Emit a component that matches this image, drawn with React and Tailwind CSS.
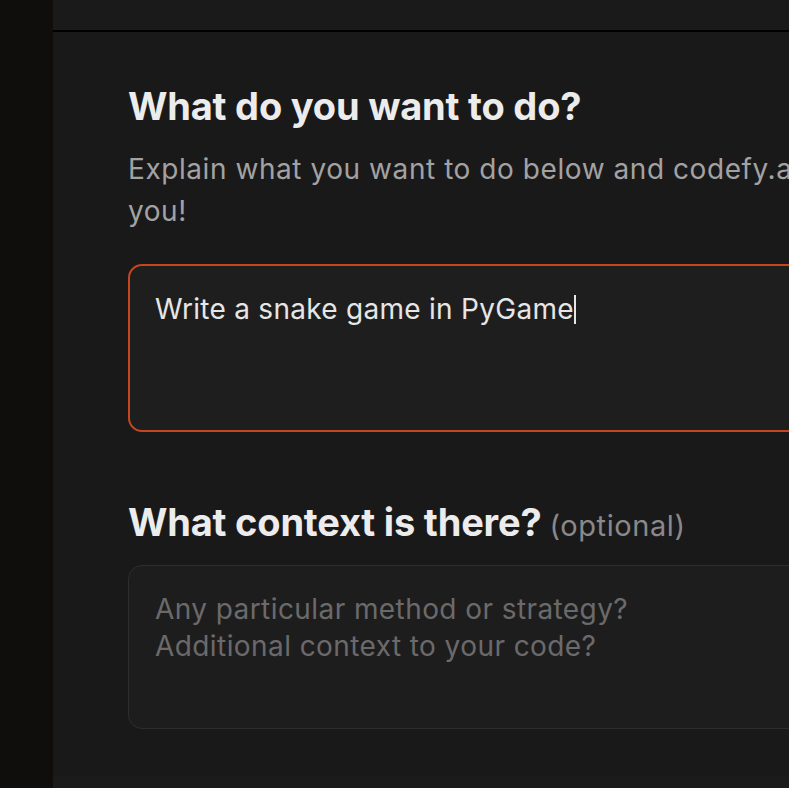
export default function App() {
  return (
    <div className="flex h-[788px] w-[789px] overflow-hidden bg-[#0f0e0d]" style={{ fontFamily: "Inter, 'Noto Sans', sans-serif" }}>
      <div className="w-[53px] shrink-0 bg-[#0f0e0d]" />
      <div className="flex min-w-0 flex-1 flex-col bg-[#1a191a]">
        <div className="h-[32px] shrink-0 border-b-2 border-black bg-[#1b1a1b]" />
        <div className="flex flex-1 flex-col pl-[75px]">
          <h1 className="mt-[51px] whitespace-nowrap text-[38px] font-bold leading-[46px] tracking-[-0.005em] text-[#ececec]">
            What do you want to do?
          </h1>
          <p className="mt-[19px] w-[1010px] shrink-0 text-[28px] leading-[42px] tracking-[0.02em] text-[#a3a2a3]">
            Explain what you want to do below and codefy.ai will write the code for you!
          </p>
          <div className="mt-[32px] h-[168px] w-[720px] shrink-0 rounded-[14px] border-2 border-[#c4461f] bg-[#1f1e1f] pl-[25px] pt-[23px]">
            <span className="text-[28px] leading-[40px] tracking-[0.01em] text-[#e6e6e6]">Write a snake game in PyGame</span>
            <span className="inline-block h-[29px] w-[2px] translate-y-[5px] bg-[#e6e6e6]" />
          </div>
          <div className="mt-[67px] flex items-baseline gap-[8px] whitespace-nowrap">
            <span className="text-[38px] font-bold leading-[46px] tracking-[-0.005em] text-[#ececec]">What context is there?</span>
            <span className="text-[29px] tracking-[0.02em] text-[#8a898a]">(optional)</span>
          </div>
          <div className="mt-[17px] h-[164px] w-[720px] shrink-0 rounded-[14px] border border-[#2e2d2e] bg-[#1e1d1e] pl-[26px] pt-[25px] text-[28px] leading-[37px] tracking-[0.015em] text-[#6b6a6b]">
            <div>Any particular method or strategy?</div>
            <div>Additional context to your code?</div>
          </div>
          <div className="flex-1" />
        </div>
        <div className="h-[12px] shrink-0 bg-[#1c1b1b]" />
      </div>
    </div>
  );
}
